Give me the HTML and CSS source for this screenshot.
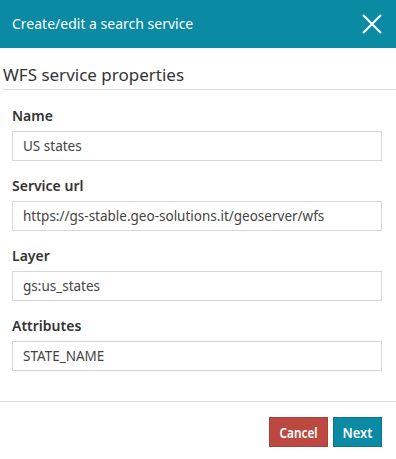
FILE: index.html
```html
<!DOCTYPE html>
<html>
<head>
<meta charset="utf-8">
<link rel="stylesheet" href="styles.css">
</head>
<body>
<div class="dialog">
  <div class="header">
    <span class="title">Create/edit a search service</span>
    <svg class="close" width="20" height="20" viewBox="0 0 20 20"><path d="M1 1 L19 19 M19 1 L1 19" stroke="#fff" stroke-width="2" fill="none"/></svg>
  </div>
  <div class="content">
    <div class="section-title">WFS service properties</div>
    <div class="fields">
      <div class="field">
        <label class="label">Name</label>
        <div class="input">US states</div>
      </div>
      <div class="field">
        <label class="label">Service url</label>
        <div class="input">https://gs-stable.geo-solutions.it/geoserver/wfs</div>
      </div>
      <div class="field">
        <label class="label">Layer</label>
        <div class="input">gs:us_states</div>
      </div>
      <div class="field">
        <label class="label">Attributes</label>
        <div class="input">STATE_NAME</div>
      </div>
    </div>
  </div>
  <div class="footer">
    <button class="btn cancel"><span class="btn-text">Cancel</span></button>
    <button class="btn next"><span class="btn-text">Next</span></button>
  </div>
</div>
</body>
</html>
```
FILE: styles.css
```css
html, body {
  margin: 0;
  padding: 0;
  background: #fff;
}
body {
  font-family: "Noto Sans", "Open Sans", sans-serif;
  color: #333;
  width: 396px;
}
.header {
  height: 48px;
  background: #0a8aa3;
  display: flex;
  align-items: center;
  justify-content: space-between;
  padding: 0 14px 0 12px;
}
.title {
  color: #fff;
  font-size: 14px;
  line-height: 20px;
}
.close {
  display: block;
  margin-top: -1px;
}
.content {
  padding: 14px 0 30px 3px;
  border-bottom: 1px solid #ddd;
}
.section-title {
  font-size: 17px;
  line-height: 25px;
  color: #333;
  padding-bottom: 2px;
  border-bottom: 1px solid #ddd;
}
.fields {
  display: flex;
  flex-direction: column;
  gap: 15px;
  padding: 16px 14px 0 9px;
}
.field {
  display: flex;
  flex-direction: column;
  gap: 5px;
}
.label {
  font-size: 14px;
  font-weight: 600;
  line-height: 20px;
  color: #333;
}
.input {
  height: 28px;
  border: 1px solid #d6d6d6;
  padding: 0 10px;
  font-size: 13.5px;
  line-height: 28px;
  color: #444;
}
.footer {
  display: flex;
  justify-content: flex-end;
  gap: 5px;
  padding: 15px 14px 14px 0;
}
.btn {
  height: 30px;
  border: 1px solid;
  color: #fff;
  font-family: "Noto Sans", "Open Sans", sans-serif;
  padding: 0;
  margin: 0;
  display: flex;
  align-items: center;
  justify-content: center;
}
.btn-text {
  display: inline-block;
}
.cancel {
  width: 59px;
  background: #bb4942;
  border-color: #a8413b;
  font-size: 14px;
  font-weight: 600;
}
.cancel .btn-text {
  transform: scaleX(0.84);
}
.next {
  width: 49px;
  background: #0a8aa3;
  border-color: #087a90;
  font-size: 15px;
  font-weight: 600;
}
.next .btn-text {
  transform: scaleX(0.86);
}
```
